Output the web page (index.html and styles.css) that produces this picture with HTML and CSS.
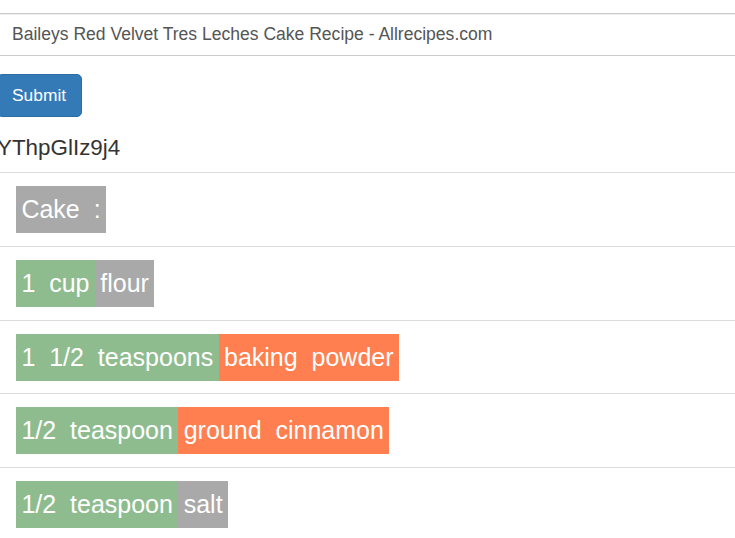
FILE: index.html
```html
<!DOCTYPE html>
<html>
<head>
<meta charset="utf-8">
<link rel="stylesheet" href="styles.css">
</head>
<body>
<div class="page">
  <form class="url-form">
    <input class="url-input" type="text" value="Baileys Red Velvet Tres Leches Cake Recipe - Allrecipes.com">
    <button class="btn-submit" type="button">Submit</button>
  </form>
  <div class="recipe-id">YThpGlIz9j4</div>
  <ul class="ingredients">
    <li class="item"><span class="tag tag-other">Cake&nbsp; :</span></li>
    <li class="item"><span class="tag tag-qty">1&nbsp; cup</span><span class="tag tag-other">flour</span></li>
    <li class="item"><span class="tag tag-qty">1&nbsp; 1/2&nbsp; teaspoons</span><span class="tag tag-ing">baking&nbsp; powder</span></li>
    <li class="item"><span class="tag tag-qty">1/2&nbsp; teaspoon</span><span class="tag tag-ing">ground&nbsp; cinnamon</span></li>
    <li class="item"><span class="tag tag-qty">1/2&nbsp; teaspoon</span><span class="tag tag-other">salt</span></li>
  </ul>
</div>
</body>
</html>
```
FILE: styles.css
```css
html, body {
  margin: 0;
  padding: 0;
  background: #fff;
  overflow: hidden;
}
body {
  font-family: "Liberation Sans", Arial, sans-serif;
  color: #333;
}
.page {
  margin-left: -3px;
  padding-top: 13px;
}
.url-form {
  display: flex;
  flex-direction: column;
  align-items: flex-start;
  margin: 0;
}
.url-input {
  display: block;
  box-sizing: border-box;
  width: 760px;
  height: 43px;
  margin: 0;
  padding: 0 14px;
  border: 1px solid #ccc;
  border-radius: 0;
  box-shadow: inset 0 1px 1px rgba(0, 0, 0, 0.075);
  font-family: "Liberation Sans", Arial, sans-serif;
  font-size: 17.55px;
  color: #555;
  background: #fff;
  outline: none;
}
.btn-submit {
  box-sizing: border-box;
  height: 43px;
  margin: 18px 0 0 0;
  padding: 0 15px 0 14px;
  border: 1px solid #2e6da4;
  border-radius: 5px;
  background: #337ab7;
  color: #fff;
  font-family: "Liberation Sans", Arial, sans-serif;
  font-size: 17.4px;
  cursor: pointer;
}
.recipe-id {
  margin-top: 15px;
  margin-bottom: 8px;
  font-size: 22.4px;
  line-height: 32px;
  color: #333;
}
.ingredients {
  list-style: none;
  margin: 0;
  padding: 0;
}
.item {
  display: flex;
  border-top: 1px solid #ddd;
  padding: 13px 0 12.75px 19px;
}
.tag {
  display: inline-block;
  height: 47px;
  line-height: 47px;
  padding: 0 5.4px;
  font-size: 25px;
  color: #fff;
  white-space: nowrap;
}
.tag-qty { background: #8fbc8f; }
.tag-other { background: #a9a9a9; }
.tag-ing { background: #ff7f50; }
```
